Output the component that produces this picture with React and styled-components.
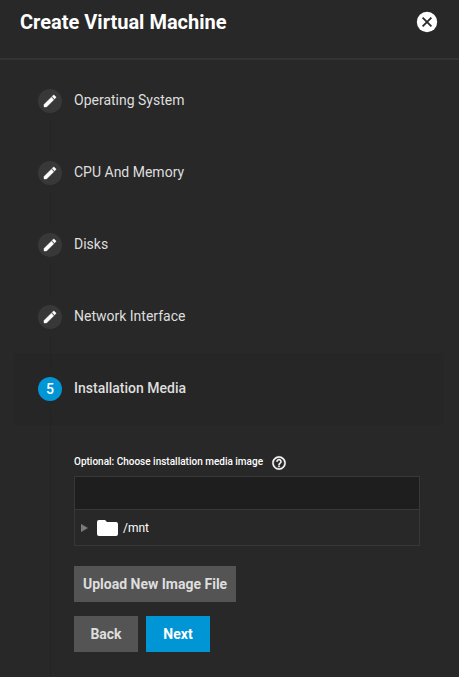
import styled, { createGlobalStyle } from 'styled-components';

const doneSteps = ['Operating System', 'CPU And Memory', 'Disks', 'Network Interface'];

const App = () => {
	return (
		<>
			<GlobalStyle />
			<Header>
				<Title>Create Virtual Machine</Title>
				<IconButton aria-label='Close'>
					<svg viewBox='0 0 24 24' width='24' height='24'>
						<circle cx='12' cy='12' r='10.2' fill='#fff' />
						<path d='M7.6 7.6l8.8 8.800M16.400 7.600l-8.800 8.800' stroke='#282828' strokeWidth='1.8' />
					</svg>
				</IconButton>
			</Header>
			<Stepper>
				{doneSteps.map((name, i) => (
					<StepHeader key={name}>
						<Track>
							<Line $hidden={i === 0} />
							<StepIcon>
								<svg viewBox='0 0 24 24' width='16' height='16'>
									<path
										fill='#fff'
										stroke='#fff'
										strokeWidth='0.6'
										d='M3 17.25V21h3.75L17.81 9.94l-3.75-3.75L3 17.25zM20.71 7.04a1 1 0 0 0 0-1.41l-2.34-2.34a1 1 0 0 0-1.41 0l-1.83 1.83 3.75 3.75 1.83-1.83z'
									/>
								</svg>
							</StepIcon>
							<Line />
						</Track>
						<StepLabel>{name}</StepLabel>
					</StepHeader>
				))}
				<StepHeader $active aria-current='step'>
					<Track>
						<Line />
						<StepIcon $active>5</StepIcon>
						<Line />
					</Track>
					<StepLabel $active>Installation Media</StepLabel>
				</StepHeader>
				<StepContent>
					<FieldLabel>
						<label htmlFor='media'>Optional: Choose installation media image</label>
						<IconButton aria-label='Help'>
							<svg viewBox='0 0 24 24' width='16' height='16'>
								<path
									fill='#fff'
									stroke='#fff'
									strokeWidth='0.5'
									d='M11 18h2v-2h-2v2zm1-16C6.48 2 2 6.48 2 12s4.48 10 10 10 10-4.48 10-10S17.52 2 12 2zm0 18c-4.41 0-8-3.59-8-8s3.59-8 8-8 8 3.59 8 8-3.59 8-8 8zm0-14c-2.21 0-4 1.79-4 4h2c0-1.1.9-2 2-2s2 .9 2 2c0 2-3 1.75-3 5h2c0-2.25 3-2.5 3-5 0-2.21-1.79-4-4-4z'
								/>
							</svg>
						</IconButton>
					</FieldLabel>
					<PathInput id='media' type='text' />
					<Tree>
						<ExpandButton aria-label='Expand /mnt'>
							<svg viewBox='0 0 7 8' width='7' height='8'>
								<path fill='#7c7c7c' d='M0 0l7 4-7 4z' />
							</svg>
						</ExpandButton>
						<svg viewBox='0 0 21 16' width='21' height='16'>
							<path
								fill='#fff'
								d='M2 0h6l2 2h9a2 2 0 0 1 2 2v10a2 2 0 0 1-2 2H2a2 2 0 0 1-2-2V2a2 2 0 0 1 2-2z'
							/>
						</svg>
						<span>/mnt</span>
					</Tree>
					<Actions>
						<Button>Upload New Image File</Button>
					</Actions>
					<Actions>
						<Button>Back</Button>
						<Button $primary>Next</Button>
					</Actions>
				</StepContent>
			</Stepper>
		</>
	);
};

export default App;

const GlobalStyle = createGlobalStyle`
	* {
		box-sizing: border-box;
	}

	body {
		margin: 0;
		background: #282828;
		color: #fff;
		font-family: Roboto, sans-serif;
	}

	svg {
		display: block;
		flex: none;
	}
`;

const Header = styled.header`
	display: flex;
	align-items: center;
	justify-content: space-between;
	height: 60px;
	padding: 0 20px 14px;
	border-bottom: 2px solid #333;
`;

const Title = styled.h1`
	margin: 0;
	font-size: 20px;
	line-height: 28px;
	font-weight: 700;
`;

const IconButton = styled.button`
	padding: 0;
	border: 0;
	background: none;
	cursor: pointer;
`;

const Stepper = styled.main`
	padding: 5px 15px 0 14px;
`;

const StepHeader = styled.div`
	display: flex;
	align-items: center;
	gap: 12px;
	height: 72px;
	padding: 0 24px;
	background: ${(props) => (props.$active ? '#262626' : 'transparent')};
`;

const Track = styled.div`
	display: flex;
	flex-direction: column;
	align-items: center;
	gap: 8px;
`;

const Line = styled.div`
	width: 1px;
	height: 16px;
	background: ${(props) => (props.$hidden ? 'transparent' : '#232323')};
`;

const StepIcon = styled.div`
	display: flex;
	align-items: center;
	justify-content: center;
	width: 24px;
	height: 24px;
	border-radius: 50%;
	background: ${(props) => (props.$active ? '#0095d5' : '#383838')};
	font-size: 14px;
	font-weight: 500;
`;

const StepLabel = styled.span`
	padding-bottom: 2px;
	color: #dedede;
	font-size: 14px;
	line-height: 20px;
	font-weight: ${(props) => (props.$active ? 500 : 400)};
`;

const StepContent = styled.section`
	margin-left: 36px;
	padding: 30px 24px 24px 23px;
	border-left: 1px solid #232323;
`;

const FieldLabel = styled.div`
	display: flex;
	align-items: center;
	gap: 8px;
	padding-bottom: 5px;
	font-size: 10px;
	line-height: 14px;
	font-weight: 500;

	label {
		padding-bottom: 2px;
	}
`;

const PathInput = styled.input`
	display: block;
	width: 100%;
	height: 34px;
	padding: 0 8px;
	border: 1px solid #383838;
	border-radius: 0;
	background: #1e1e1e;
	color: #fff;
	font: inherit;
`;

const Tree = styled.div`
	display: flex;
	align-items: center;
	height: 36px;
	padding-left: 6px;
	border: 1px solid #383838;
	border-top: 0;
	font-size: 12px;

	span {
		padding-left: 5px;
	}
`;

const ExpandButton = styled(IconButton)`
	padding-right: 9px;
`;

const Actions = styled.div`
	display: flex;
	gap: 8px;
	padding-top: 20px;

	& + & {
		padding-top: 14px;
	}
`;

const Button = styled.button`
	min-width: 64px;
	height: 36px;
	padding: 0 9px;
	border: 0;
	background: ${(props) => (props.$primary ? '#0095d5' : '#545454')};
	color: ${(props) => (props.$primary ? '#fff' : '#dedede')};
	font-family: Roboto, sans-serif;
	font-size: 14px;
	font-weight: 700;
	cursor: pointer;
`;
